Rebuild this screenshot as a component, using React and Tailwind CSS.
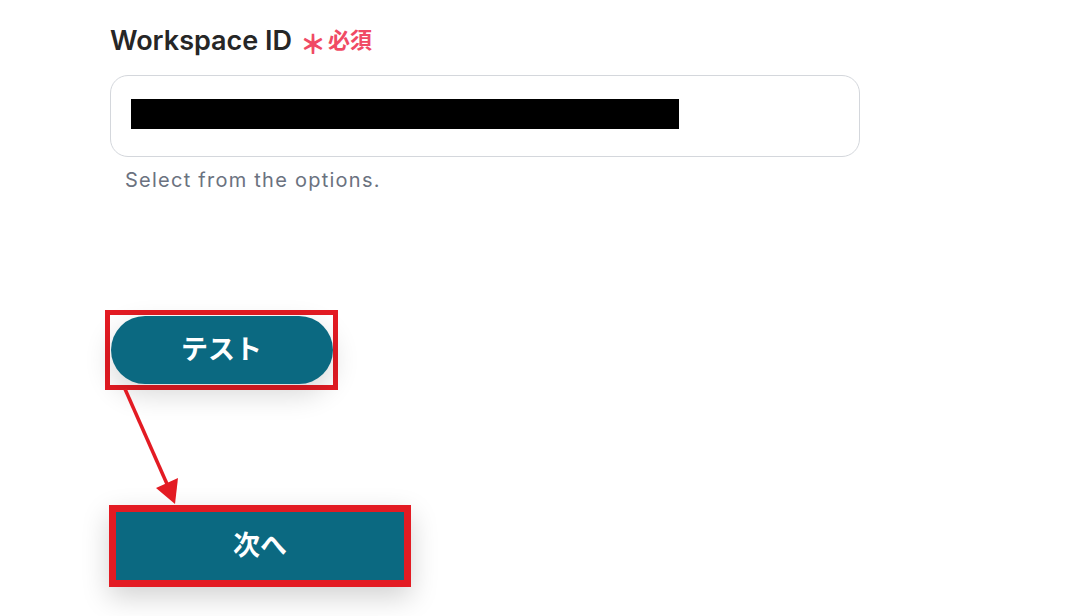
export default function App() {
  return (
    <div
      className="relative w-[1066px] h-[616px] bg-white overflow-hidden"
      style={{ fontFamily: 'Inter, "Noto Sans CJK JP", sans-serif' }}
    >
      <div className="flex flex-col items-start pl-[110px] pt-[22px]">
        <div className="flex items-center h-[36px]">
          <span className="text-[27px] font-semibold text-[#262626] leading-none">
            Workspace ID
          </span>
          <span
            className="ml-[8px] text-[26px] font-black text-[#f04a64] leading-none mt-[6px]"
            style={{ fontFamily: '"Noto Sans CJK JP", sans-serif' }}
          >
            ＊
          </span>
          <span className="ml-[2px] text-[22px] font-bold text-[#f04a64] leading-none">
            必須
          </span>
        </div>
        <div className="mt-[17px] w-[750px] h-[82px] border border-[#d4d7dc] rounded-[18px] flex items-start pt-[23px] pl-[20px]">
          <div className="w-[548px] h-[30px] bg-black" />
        </div>
        <div className="mt-[10px] ml-[15px] text-[20px] text-[#6b7280] tracking-[1.25px] leading-[26px]">
          Select from the options.
        </div>

        <div className="mt-[117px] ml-[-5px] w-[233px] h-[80px] border-[5px] border-[#e31b23] flex items-center justify-center">
          <div className="w-[222px] h-[68px] rounded-full bg-[#0b6981] flex items-center justify-center text-white text-[27px] font-bold shadow-[0_10px_28px_rgba(0,0,0,0.16)]">
            テスト
          </div>
        </div>

        <div className="mt-[115px] ml-[-1px] w-[302px] h-[82px] border-[7px] border-[#e31b23] bg-[#0b6981] flex items-center justify-center text-white text-[27px] font-bold shadow-[0_10px_28px_rgba(0,0,0,0.18)]">
          次へ
        </div>
      </div>

      <svg className="absolute left-0 top-0 pointer-events-none" width="1066" height="616">
        <line x1="125" y1="389" x2="167" y2="484" stroke="#e31b23" strokeWidth="3.5" />
        <polygon points="175,504 156,488 178,478" fill="#e31b23" />
      </svg>
    </div>
  );
}
